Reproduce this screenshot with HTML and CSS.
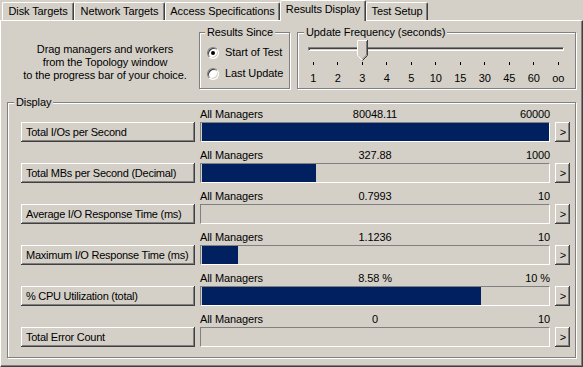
FILE: index.html
```html
<!DOCTYPE html>
<html lang="en">
<head>
  <meta charset="UTF-8">
  <title>Results Display</title>
  <link rel="stylesheet" href="styles.css">
</head>
<body>

  <div class="tabs">
    <div class="tab tab-disk">Disk Targets</div>
    <div class="tab tab-network">Network Targets</div>
    <div class="tab tab-access">Access Specifications</div>
    <div class="tab tab-results active">Results Display</div>
    <div class="tab tab-setup">Test Setup</div>
  </div>

  <div class="panel">
    <div class="top-row">
      <div class="hint">
        Drag managers and workers<br>
        from the Topology window<br>
        to the progress bar of your choice.
      </div>

      <fieldset class="group group-since">
        <legend>Results Since</legend>
        <label class="radio-row">
          <span class="radio checked"></span>
          Start of Test
        </label>
        <label class="radio-row">
          <span class="radio"></span>
          Last Update
        </label>
      </fieldset>

      <fieldset class="group group-freq">
        <legend>Update Frequency (seconds)</legend>
        <div class="track">
          <svg class="thumb" width="11" height="21" viewBox="0 0 11 21">
            <polygon points="0,0 11,0 11,15.5 5.5,21 0,15.5" fill="#d4d0c8"/>
            <path d="M0.5 15.5 V0.5 H10" stroke="#fff" fill="none"/>
            <path d="M0.5 15.5 L5 20" stroke="#fff" fill="none"/>
            <path d="M10.5 0 V15.5 L5.5 20.5" stroke="#404040" fill="none"/>
            <path d="M9.5 1 V15 L5.5 19" stroke="#808080" fill="none"/>
          </svg>
        </div>
        <div class="scale">
          <div class="step"><i></i><span>1</span></div>
          <div class="step"><i></i><span>2</span></div>
          <div class="step"><i></i><span>3</span></div>
          <div class="step"><i></i><span>4</span></div>
          <div class="step"><i></i><span>5</span></div>
          <div class="step"><i></i><span>10</span></div>
          <div class="step"><i></i><span>15</span></div>
          <div class="step"><i></i><span>30</span></div>
          <div class="step"><i></i><span>45</span></div>
          <div class="step"><i></i><span>60</span></div>
          <div class="step"><i></i><span>oo</span></div>
        </div>
      </fieldset>
    </div>

    <fieldset class="group group-display">
      <legend>Display</legend>
      <div class="rows">

        <div class="row">
          <div class="meter-head"><span>All Managers</span><span class="val">80048.11</span><span class="max">60000</span></div>
          <button class="metric">Total I/Os per Second</button>
          <div class="bar"><div class="fill" style="width: 347px"></div></div>
          <button class="more">&gt;</button>
        </div>

        <div class="row">
          <div class="meter-head"><span>All Managers</span><span class="val">327.88</span><span class="max">1000</span></div>
          <button class="metric">Total MBs per Second (Decimal)</button>
          <div class="bar"><div class="fill" style="width: 114px"></div></div>
          <button class="more">&gt;</button>
        </div>

        <div class="row">
          <div class="meter-head"><span>All Managers</span><span class="val">0.7993</span><span class="max">10</span></div>
          <button class="metric">Average I/O Response Time (ms)</button>
          <div class="bar"><div class="fill" style="width: 0px"></div></div>
          <button class="more">&gt;</button>
        </div>

        <div class="row">
          <div class="meter-head"><span>All Managers</span><span class="val">1.1236</span><span class="max">10</span></div>
          <button class="metric">Maximum I/O Response Time (ms)</button>
          <div class="bar"><div class="fill" style="width: 36px"></div></div>
          <button class="more">&gt;</button>
        </div>

        <div class="row">
          <div class="meter-head"><span>All Managers</span><span class="val">8.58 %</span><span class="max">10 %</span></div>
          <button class="metric">% CPU Utilization (total)</button>
          <div class="bar"><div class="fill" style="width: 279px"></div></div>
          <button class="more">&gt;</button>
        </div>

        <div class="row">
          <div class="meter-head"><span>All Managers</span><span class="val">0</span><span class="max">10</span></div>
          <button class="metric">Total Error Count</button>
          <div class="bar"><div class="fill" style="width: 0px"></div></div>
          <button class="more">&gt;</button>
        </div>

      </div>
    </fieldset>
  </div>

</body>
</html>
```

FILE: styles.css
```css
* {
  box-sizing: border-box;
}

body {
  margin: 0;
  width: 583px;
  height: 367px;
  overflow: hidden;
  background: #d4d0c8;
  color: #000;
  font-family: "Liberation Sans", Arial, sans-serif;
  font-size: 11px;
  line-height: 13px;
  letter-spacing: -0.1px;
}

/* tab strip */

.tabs {
  display: flex;
  align-items: flex-end;
  height: 20px;
  padding-left: 2px;
  position: relative;
  z-index: 1;
}

.tab {
  height: 18px;
  padding-top: 2px;
  text-align: center;
  white-space: nowrap;
  border-top: 1px solid #fff;
  border-left: 1px solid #fff;
  border-right: 1px solid #404040;
  border-radius: 2px 2px 0 0;
  box-shadow: inset -1px 0 #808080;
}

.tab-disk { width: 72px; }
.tab-network { width: 91px; }
.tab-access { width: 115px; }
.tab-results { width: 86px; }
.tab-setup { width: 62px; }

.tab.active {
  height: 21px;
  margin-bottom: -1px;
  background: #d4d0c8;
}

/* tab page */

.panel {
  height: 347px;
  padding: 5px 6px 0 6px;
  border-top: 1px solid #fff;
  border-left: 1px solid #fff;
  border-right: 1px solid #404040;
  border-bottom: 1px solid #404040;
  box-shadow: inset -1px -1px #808080;
}

.top-row {
  display: flex;
  height: 63px;
}

.hint {
  width: 192px;
  padding: 17px 0 0 4px;
  text-align: center;
}

.group {
  margin: 0;
  padding: 0;
  min-width: 0;
  border: 1px solid #808080;
  box-shadow: inset 1px 1px #fff, 1px 1px #fff;
}

.group legend {
  padding: 0 2px;
  margin-left: 6px;
  line-height: 12px;
  background: #d4d0c8;
}

.group-since {
  width: 91px;
  padding: 4px 0 0 7px;
}

.group-since legend {
  margin-left: -2px;
}

.radio-row {
  display: flex;
  align-items: center;
  gap: 6px;
  height: 21px;
  white-space: nowrap;
}

.radio {
  position: relative;
  flex: none;
  width: 12px;
  height: 12px;
  border-radius: 50%;
  background: #fff;
  border: 1px solid;
  border-color: #808080 #fff #fff #808080;
  box-shadow: inset 1px 1px #404040, inset -1px -1px #d4d0c8;
}

.radio.checked::after {
  content: "";
  position: absolute;
  left: 3px;
  top: 3px;
  width: 4px;
  height: 4px;
  border-radius: 50%;
  background: #000;
}

.group-freq {
  width: 279px;
  margin-left: 7px;
}

.track {
  position: relative;
  width: 256px;
  height: 4px;
  margin: 9px 0 0 10px;
  border-top: 1px solid #808080;
  border-left: 1px solid #808080;
  border-bottom: 1px solid #fff;
  border-right: 1px solid #fff;
  box-shadow: inset 1px 1px #404040;
}

.thumb {
  position: absolute;
  left: 48px;
  top: -8px;
}

.scale {
  display: grid;
  grid-template-columns: repeat(11, 24.5px);
  margin: 11px 0 0 3px;
}

.step {
  display: flex;
  flex-direction: column;
  align-items: center;
}

.step i {
  width: 1px;
  height: 3px;
  background: #000;
}

.step span {
  margin-top: 7px;
}

/* display group */

.group-display {
  height: 262px;
  margin-top: 7px;
}

.rows {
  display: flex;
  flex-direction: column;
  gap: 7px;
  padding-left: 13px;
}

.row {
  display: grid;
  grid-template-columns: 174px 350px 15px;
  grid-template-rows: 14px 20px;
  column-gap: 5px;
}

.meter-head {
  grid-column: 2;
  grid-row: 1;
  display: grid;
  grid-template-columns: 1fr auto 1fr;
  white-space: nowrap;
}

.meter-head .max {
  text-align: right;
}

.metric,
.more {
  grid-row: 2;
  margin: 0;
  padding: 0;
  font: inherit;
  color: #000;
  background: #d4d0c8;
  border: none;
  box-shadow: inset -1px -1px #404040, inset 1px 1px #fff, inset -2px -2px #808080;
}

.metric {
  grid-column: 1;
  text-align: left;
  padding-left: 5px;
  letter-spacing: -0.25px;
  white-space: nowrap;
}

.more {
  grid-column: 3;
  text-align: center;
  padding-left: 1px;
}

.bar {
  grid-column: 2;
  grid-row: 2;
  padding: 0 1px;
  border-top: 1px solid #808080;
  border-left: 1px solid #808080;
  border-bottom: 1px solid #fff;
  border-right: 1px solid #fff;
}

.fill {
  height: 100%;
  background: #002060;
}
```
